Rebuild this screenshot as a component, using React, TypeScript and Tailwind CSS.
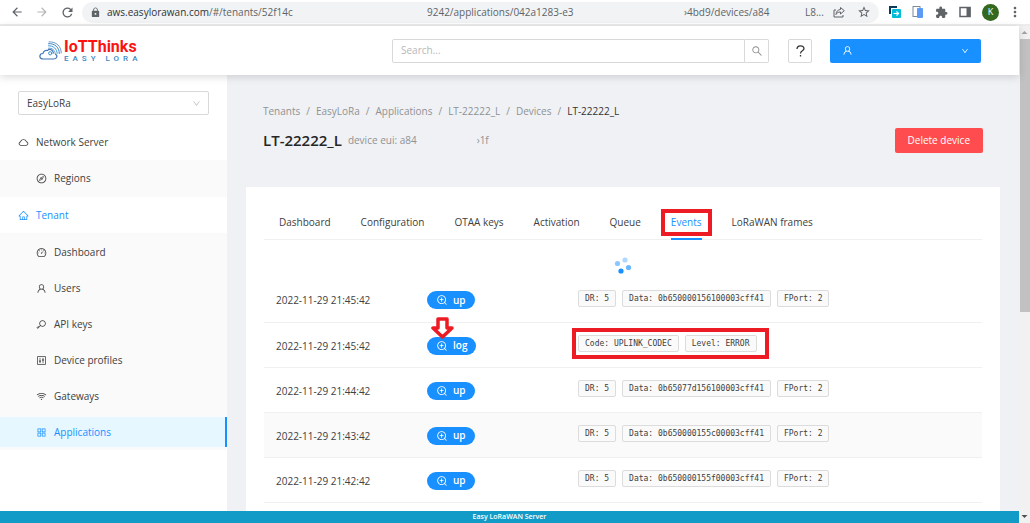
import {
  AiOutlineAppstore,
  AiOutlineCloud,
  AiOutlineCompass,
  AiOutlineControl,
  AiOutlineDashboard,
  AiOutlineDown,
  AiOutlineHome,
  AiOutlineKey,
  AiOutlineSearch,
  AiOutlineUser,
  AiOutlineWifi,
  AiOutlineZoomIn,
} from 'react-icons/ai'
import { MdArrowBack, MdArrowForward, MdExtension, MdLock, MdMoreVert, MdRefresh, MdStarBorder } from 'react-icons/md'

const tenantLinks = [
  { label: 'Dashboard', icon: AiOutlineDashboard },
  { label: 'Users', icon: AiOutlineUser },
  { label: 'API keys', icon: AiOutlineKey },
  { label: 'Device profiles', icon: AiOutlineControl },
  { label: 'Gateways', icon: AiOutlineWifi },
  { label: 'Applications', icon: AiOutlineAppstore, active: true },
]

const crumbs = ['Tenants', 'EasyLoRa', 'Applications', 'LT-22222_L', 'Devices']

const tabs = ['Dashboard', 'Configuration', 'OTAA keys', 'Activation', 'Queue', 'Events', 'LoRaWAN frames']

const events = [
  { time: '2022-11-29 21:45:42', type: 'up', tags: ['DR: 5', 'Data: 0b650000156100003cff41', 'FPort: 2'] },
  { time: '2022-11-29 21:45:42', type: 'log', tags: ['Code: UPLINK_CODEC', 'Level: ERROR'], marked: true },
  { time: '2022-11-29 21:44:42', type: 'up', tags: ['DR: 5', 'Data: 0b65077d156100003cff41', 'FPort: 2'] },
  { time: '2022-11-29 21:43:42', type: 'up', tags: ['DR: 5', 'Data: 0b650000155c00003cff41', 'FPort: 2'], hovered: true },
  { time: '2022-11-29 21:42:42', type: 'up', tags: ['DR: 5', 'Data: 0b650000155f00003cff41', 'FPort: 2'] },
]

function BrowserBar() {
  return (
    <div className="flex h-[26px] shrink-0 items-center border-b-2 border-[#ececed] bg-white pl-2.5 text-[#5f6368]">
      <div className="flex w-[72px] items-center gap-[11px]">
        <button aria-label="Back"><MdArrowBack size={14} /></button>
        <button aria-label="Forward" className="text-[#b4b6b8]"><MdArrowForward size={14} /></button>
        <button aria-label="Reload"><MdRefresh size={15} /></button>
      </div>
      <div className="flex h-[21px] flex-1 items-center rounded-full bg-[#f1f3f4] pr-2 pl-2">
        <MdLock size={11} className="mr-1.5 shrink-0" />
        <div className="grid flex-1 grid-cols-[320px_257px_121px_1fr] text-[10px] leading-4 whitespace-nowrap">
          <span><span className="text-[#303236]">aws.easylorawan.com</span>/#/tenants/52f14c</span>
          <span>9242/applications/042a1283-e3</span>
          <span>›4bd9/devices/a84</span>
          <span>L8...</span>
        </div>
        <button aria-label="Share" className="mr-3">
          <svg width="12" height="12" viewBox="0 0 12 12" fill="none" stroke="currentColor" strokeLinejoin="round">
            <path d="M3 4H1v7h9V9" />
            <path d="M7.5 1.5 11.300 4.700 7.500 8V6C5 6 4 6.800 3 8.500 3.200 5.500 4.700 3.800 7.500 3.500Z" />
          </svg>
        </button>
        <button aria-label="Bookmark"><MdStarBorder size={14} /></button>
      </div>
      <div className="flex items-center gap-[11px] pl-2.5">
        <svg width="12" height="12" viewBox="0 0 12 12">
          <path d="M0 0h8v2H2v6H0z" fill="#0b3c5d" />
          <rect x="3" y="3" width="9" height="9" rx="1" fill="#00bcd9" />
          <path d="M4.500 7.500h5M7.500 5.500l2 2-2 2" stroke="#fff" strokeWidth="1.200" fill="none" />
        </svg>
        <svg width="12" height="12" viewBox="0 0 12 12">
          <rect x="1" y="0.500" width="7" height="10" fill="#fff" stroke="#7b8a9e" />
          <rect x="5" y="2" width="6" height="10" rx="1" fill="#5b9bf5" />
        </svg>
        <MdExtension size={13} />
        <svg width="12" height="12" viewBox="0 0 12 12">
          <rect x="1" y="1.500" width="10" height="9" fill="none" stroke="#5f6368" strokeWidth="1.500" />
          <path d="M7.500 1h4v10h-4z" fill="#5f6368" />
        </svg>
        <span className="flex size-[17px] items-center justify-center rounded-full bg-[#33691e] text-[9px] text-white">K</span>
      </div>
      <button aria-label="Menu" className="mr-[7px] ml-2 w-4"><MdMoreVert size={16} /></button>
    </div>
  )
}

function Logo() {
  return (
    <a href="#" className="flex items-center gap-0.5">
      <svg width="23" height="20" viewBox="0 0 23 20" fill="none" strokeLinecap="round">
        <path d="M4.500 18C-.5 18 0 12.500 4 12.500 4.500 9.500 7 9 8.500 9.500 10.500 7 14 9 14.500 12M14.500 18H4.500M14.500 18C18 18 19 14.500 16.500 13.200" stroke="#3f74b8" strokeWidth="1.200" />
        <path d="M9.500 4.800C14.500 4.500 18 8 18.200 12.500" stroke="#3b9bd8" />
        <path d="M9.500 2.700C16 2 20.500 7 20.300 12.500" stroke="#3b82c0" />
        <path d="M10 .9C17.500 .2 22.500 6 22.200 12" stroke="#4a80c0" strokeWidth="0.800" />
        <path d="M9.500 7.200C13 6.800 16 9 16.200 12.500" stroke="#4a80c0" strokeWidth="0.800" />
        <circle cx="11.200" cy="12.300" r="1.600" stroke="#2b8fd0" />
      </svg>
      <span className="flex flex-col">
        <span className="font-[Roboto] text-[16px] leading-[17px] font-bold text-[#fb1212]">IoTThinks</span>
        <span className="font-[Roboto] text-[8px] leading-[8px] font-medium tracking-[4px] text-[#3b88c4]">EASY LORA</span>
      </span>
    </a>
  )
}

function Header() {
  return (
    <header className="z-10 flex h-[49px] shrink-0 items-center bg-white pr-[38px] pl-[39px] shadow-[0_2px_8px_rgba(0,0,0,0.15)]">
      <Logo />
      <form className="ml-auto flex h-6 w-[377px]">
        <input
          aria-label="Search"
          placeholder="Search..."
          className="min-w-0 flex-1 rounded-l-xs border border-[#d9d9d9] px-2 text-[10px] outline-none placeholder:text-[#b8b8b8]"
        />
        <button type="button" aria-label="Run search" className="flex w-6 items-center justify-center rounded-r-xs border border-l-0 border-[#d9d9d9] text-[#8c8c8c]">
          <AiOutlineSearch size={12} />
        </button>
      </form>
      <button aria-label="Help" className="ml-[19px] flex size-6 items-center justify-center rounded-xs border border-[#d9d9d9] text-[#333]">
        <svg width="9" height="12" viewBox="0 0 9 12" fill="none" stroke="currentColor" strokeWidth="1.300">
          <path d="M1 4C1 -.2 8 -.2 8 3.600 8 6 4.500 5.500 4.500 8.500" />
          <path d="M4.500 10v1.500" />
        </svg>
      </button>
      <button aria-label="Account" className="ml-[18px] flex h-6 w-[151px] items-center justify-between rounded-xs bg-[#1890ff] px-3 text-white">
        <AiOutlineUser size={11} />
        <AiOutlineDown size={8} />
      </button>
    </header>
  )
}

function Sidebar() {
  return (
    <nav className="w-[227px] shrink-0 bg-white text-[10px] text-[#404040]">
      <div className="relative mx-[18px] mt-4 mb-[9px]">
        <select aria-label="Tenant" className="h-6 w-full appearance-none rounded-xs border border-[#d9d9d9] bg-white px-2">
          <option>EasyLoRa</option>
        </select>
        <AiOutlineDown size={9} className="pointer-events-none absolute top-2 right-2 text-[#bfbfbf]" />
      </div>
      <a href="#" className="flex h-9 items-center gap-[7px] pl-[18px]"><AiOutlineCloud size={11} />Network Server</a>
      <a href="#" className="flex h-[37px] items-center gap-[7px] bg-[#fafafa] pl-9"><AiOutlineCompass size={11} />Regions</a>
      <a href="#" className="flex h-9 items-center gap-[7px] pl-[18px] text-[#1890ff]"><AiOutlineHome size={11} />Tenant</a>
      <div className="bg-[#fafafa] pt-px">
        {tenantLinks.map(({ label, icon: Icon, active }) => (
          <div key={label} className="py-[3px]">
            <a
              href="#"
              className={`flex h-[30px] items-center gap-[7px] pl-9 ${active ? 'border-r-2 border-[#1890ff] bg-[#e6f7ff] text-[#1890ff]' : ''}`}
            >
              <Icon size={11} />
              {label}
            </a>
          </div>
        ))}
      </div>
    </nav>
  )
}

function EventsTable() {
  return (
    <table className="w-full table-fixed text-left">
      <colgroup>
        <col className="w-[151px]" />
        <col className="w-[151px]" />
        <col />
      </colgroup>
      <tbody>
        {events.map((event, i) => (
          <tr key={i} className={`h-[45px] border-b border-[#f0f0f0] ${event.hovered ? 'bg-[#fafafa]' : ''}`}>
            <td className="px-3 pt-[3px]">{event.time}</td>
            <td className="px-3 pt-0.5">
              <div className="relative flex">
                <button className="flex h-[18px] items-center gap-[5px] rounded-full bg-[#1890ff] px-[9px] text-[10px] font-semibold text-white">
                  <AiOutlineZoomIn size={12} />
                  {event.type}
                </button>
                {event.marked && (
                  <svg className="absolute -top-5 left-1" width="24" height="24" viewBox="0 0 24 24">
                    <path d="M7 2h9v9h5l-9.500 9L2 11h5z" fill="#fff" stroke="#ed1c24" strokeWidth="3.500" strokeLinejoin="round" />
                  </svg>
                )}
              </div>
            </td>
            <td className="px-3 pb-0.5">
              <div className="relative flex w-fit gap-1.5 pr-1.5">
                {event.tags.map((tag) => (
                  <code key={tag} className="rounded-xs border border-[#dcdcdc] bg-[#fafafa] px-1.5 font-['DejaVu_Sans_Mono',monospace] text-[8px] leading-[15px]">
                    {tag}
                  </code>
                ))}
                {event.marked && <span className="absolute -inset-x-1.5 -inset-y-[7px] border-4 border-[#ed1c24]" />}
              </div>
            </td>
          </tr>
        ))}
      </tbody>
    </table>
  )
}

function DevicePage() {
  return (
    <main className="flex min-w-0 flex-1 flex-col bg-[#eff1f5] px-[19px]">
      <div className="px-[17px] pt-7">
        <div className="flex gap-1.5 leading-4 text-[#8f9194]">
          {crumbs.map((crumb, i) => (
            <span key={i} className="flex gap-1.5">
              <a href="#">{crumb}</a>
              <span>/</span>
            </span>
          ))}
          <span className="text-[#333]">LT-22222_L</span>
        </div>
        <div className="mt-[9px] flex h-[25px] items-center">
          <h1 className="text-[15px] font-semibold text-[#262626]">LT-22222_L</h1>
          <span className="ml-1.5 text-[#8f9194]">device eui: a84</span>
          <span className="ml-[60px] text-[#8f9194]">›1f</span>
          <button className="ml-auto h-[25px] rounded-xs bg-[#ff4d4f] px-[13px] text-white">Delete device</button>
        </div>
      </div>
      <section className="mt-[34px] flex-1 bg-white px-[18px] pt-[18px]">
        <div role="tablist" className="flex h-[35px] gap-[30px] border-b border-[#f0f0f0] pl-[15px]">
          {tabs.map((tab) => (
            <button
              key={tab}
              role="tab"
              aria-selected={tab === 'Events'}
              className={`relative -mb-px pt-0.5 whitespace-nowrap ${tab === 'Events' ? 'border-b-2 border-[#1890ff] text-[#1890ff]' : 'border-b-2 border-transparent'}`}
            >
              {tab}
              {tab === 'Events' && <span className="absolute -inset-x-2.5 top-1 bottom-0.5 border-4 border-[#ed1c24]" />}
            </button>
          ))}
        </div>
        <div className="flex h-[37px] items-end justify-center pb-0.5">
          <svg width="18" height="18" viewBox="0 0 18 18" fill="#1890ff">
            <circle cx="11" cy="3" r="2.600" opacity="0.350" />
            <circle cx="14.500" cy="10.500" r="2.600" opacity="0.650" />
            <circle cx="7" cy="14" r="2.600" />
            <circle cx="3.500" cy="6.500" r="2.600" opacity="0.500" />
          </svg>
        </div>
        <EventsTable />
      </section>
    </main>
  )
}

function Scrollbar() {
  return (
    <div className="flex w-[11px] shrink-0 flex-col items-center justify-between bg-[#f1f1f1]">
      <svg width="11" height="13" viewBox="0 0 11 13"><path d="M2.500 8 5.500 5l3 3z" fill="#a3a3a3" /></svg>
      <div className="mb-auto h-[55%] w-2.5 bg-[#c1c1c1]" />
      <svg width="11" height="13" viewBox="0 0 11 13"><path d="M2.500 5 5.500 8l3-3z" fill="#505050" /></svg>
    </div>
  )
}

export default function App() {
  return (
    <div className="flex h-screen flex-col overflow-hidden bg-white font-['Open_Sans','Noto_Sans',sans-serif] text-[10px] text-[#404040]">
      <BrowserBar />
      <div className="flex min-h-0 flex-1">
        <div className="flex min-w-0 flex-1 flex-col">
          <Header />
          <div className="flex min-h-0 flex-1 overflow-hidden">
            <Sidebar />
            <DevicePage />
          </div>
          <footer className="h-3 shrink-0 bg-[#129bc7] text-center text-[7px] leading-3 font-semibold text-white">Easy LoRaWAN Server</footer>
        </div>
        <Scrollbar />
      </div>
    </div>
  )
}
